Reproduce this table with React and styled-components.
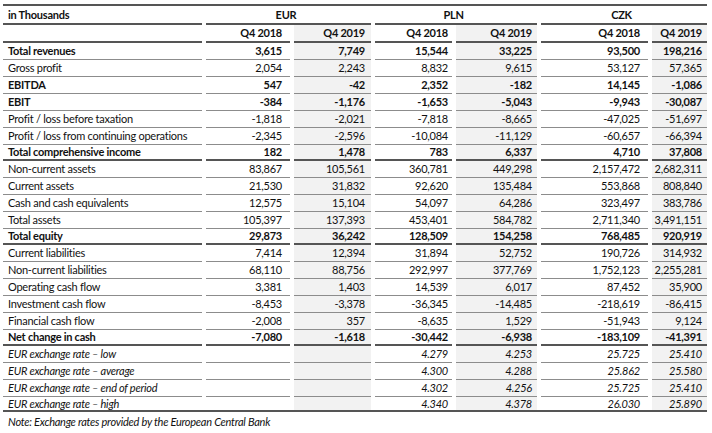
import React from "react";
import styled, { createGlobalStyle } from "styled-components";

const GlobalStyle = createGlobalStyle`
	body {
		margin: 0;
		background: #fff;
		font-family: Lato, "Liberation Sans", sans-serif;
		color: #111;
	}
`;

const Sheet = styled.div`
	margin: 4px 5px 0 3px;
	display: grid;
	grid-template-columns: 199px 84px 77px 77px 81px 107px 55px;
	column-gap: 4px;
	border-top: 2px solid #555;
	border-bottom: 2px solid #555;
	font-size: 11px;
	letter-spacing: -0.25px;
`;

const Cell = styled.div`
	grid-column: span ${(p) => p.$span || 1};
	height: ${(p) => p.$h || 16}px;
	line-height: ${(p) => p.$h || 16}px;
	padding: ${(p) => (p.$label ? "0 0 0 5px" : `0 ${p.$pad || 5}px 0 0`)};
	text-align: ${(p) => (p.$center ? "center" : p.$label ? "left" : "right")};
	font-weight: ${(p) => (p.$bold ? 700 : 400)};
	font-style: ${(p) => (p.$italic ? "italic" : "normal")};
	background: ${(p) => (p.$shade ? "#f2f2f2" : "transparent")};
	border-bottom: ${(p) =>
		p.$line === "thick" ? "2px solid #555" : p.$line === "none" ? "none" : "1px solid #8c8c8c"};
	white-space: nowrap;
	overflow: hidden;
`;

const Note = styled.p`
	margin: 3px 0 0 8px;
	font-size: 11px;
	line-height: 14px;
	letter-spacing: -0.25px;
	font-style: italic;
`;

const pads = [8, 6, 4, 5, 8, 5];

// [label, style, values, line, height]
const rows = [
	["Total revenues", "b", ["3,615", "7,749", "15,544", "33,225", "93,500", "198,216"]],
	["Gross profit", "", ["2,054", "2,243", "8,832", "9,615", "53,127", "57,365"]],
	["EBITDA", "b", ["547", "-42", "2,352", "-182", "14,145", "-1,086"]],
	["EBIT", "b", ["-384", "-1,176", "-1,653", "-5,043", "-9,943", "-30,087"]],
	["Profit / loss before taxation", "", ["-1,818", "-2,021", "-7,818", "-8,665", "-47,025", "-51,697"]],
	["Profit / loss from continuing operations", "", ["-2,345", "-2,596", "-10,084", "-11,129", "-60,657", "-66,394"]],
	["Total comprehensive income", "b", ["182", "1,478", "783", "6,337", "4,710", "37,808"], "thick", 14],
	["Non-current assets", "", ["83,867", "105,561", "360,781", "449,298", "2,157,472", "2,682,311"]],
	["Current assets", "", ["21,530", "31,832", "92,620", "135,484", "553,868", "808,840"]],
	["Cash and cash equivalents", "", ["12,575", "15,104", "54,097", "64,286", "323,497", "383,786"]],
	["Total assets", "", ["105,397", "137,393", "453,401", "584,782", "2,711,340", "3,491,151"]],
	["Total equity", "b", ["29,873", "36,242", "128,509", "154,258", "768,485", "920,919"], "thick", 14],
	["Current liabilities", "", ["7,414", "12,394", "31,894", "52,752", "190,726", "314,932"]],
	["Non-current liabilities", "", ["68,110", "88,756", "292,997", "377,769", "1,752,123", "2,255,281"]],
	["Operating cash flow", "", ["3,381", "1,403", "14,539", "6,017", "87,452", "35,900"]],
	["Investment cash flow", "", ["-8,453", "-3,378", "-36,345", "-14,485", "-218,619", "-86,415"]],
	["Financial cash flow", "", ["-2,008", "357", "-8,635", "1,529", "-51,943", "9,124"]],
	["Net change in cash", "b", ["-7,080", "-1,618", "-30,442", "-6,938", "-183,109", "-41,391"], "thick", 14],
	["EUR exchange rate \u2013 low", "i", ["", "", "4.279", "4.253", "25.725", "25.410"]],
	["EUR exchange rate \u2013 average", "i", ["", "", "4.300", "4.288", "25.862", "25.580"]],
	["EUR exchange rate \u2013 end of period", "i", ["", "", "4.302", "4.256", "25.725", "25.410"]],
	["EUR exchange rate \u2013 high", "i", ["", "", "4.340", "4.378", "26.030", "25.890"], "none", 13],
];

const App = () => (
	<>
		<GlobalStyle />
		<Sheet>
			<Cell $label $bold $h={17} $line="thick">in Thousands</Cell>
			{["EUR", "PLN", "CZK"].map((c) => (
				<Cell key={c} $span={2} $center $bold $h={17} $line="thick">
					{c}
				</Cell>
			))}

			<Cell $label $line="thick" />
			{[0, 1, 2, 3, 4, 5].map((i) => (
				<Cell key={i} $bold $shade={i % 2 === 1} $pad={pads[i]} $line="thick">
					{i % 2 === 0 ? "Q4 2018" : "Q4 2019"}
				</Cell>
			))}

			{rows.map(([label, style, vals, line, h]) => (
				<React.Fragment key={label}>
					<Cell $label $bold={style === "b"} $italic={style === "i"} $line={line} $h={h}>
						{label}
					</Cell>
					{vals.map((v, i) => (
						<Cell
							key={i}
							$bold={style === "b"}
							$italic={style === "i"}
							$shade={i % 2 === 1}
							$pad={pads[i]}
							$line={line}
							$h={h}
						>
							{v}
						</Cell>
					))}
				</React.Fragment>
			))}
		</Sheet>
		<Note>Note: Exchange rates provided by the European Central Bank</Note>
	</>
);

export default App;
